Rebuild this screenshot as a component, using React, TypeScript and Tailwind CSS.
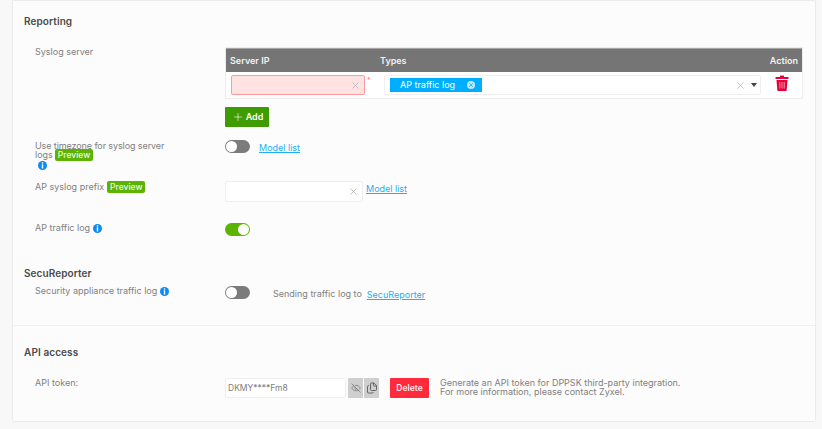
import { Plus, X, EyeOff, Files } from 'lucide-react'

const font = { fontFamily: 'Inter, "Open Sans", sans-serif' }

function Preview() {
  return (
    <span className="inline-block h-[12px] rounded-[2px] bg-[#5cb300] px-[3px] text-[8.5px] leading-[12px] font-medium text-[#eef8e0]">
      Preview
    </span>
  )
}

function InfoDot() {
  return (
    <svg width="9" height="9" viewBox="0 0 9 9" className="inline-block align-middle">
      <circle cx="4.5" cy="4.5" r="4.5" fill="#0c8cf0" />
      <rect x="3.8" y="1.3" width="1.4" height="1.3" fill="#fff" />
      <rect x="3.8" y="3.3" width="1.4" height="4.2" fill="#fff" />
    </svg>
  )
}

function Toggle({ on }: { on?: boolean }) {
  return (
    <div
      className={`flex h-[13px] w-[25px] items-center rounded-full px-[1px] ${
        on ? 'justify-end bg-[#5cb300]' : 'justify-start bg-[#7b7b7b]'
      }`}
    >
      <div className="h-[11px] w-[11px] rounded-full bg-white" />
    </div>
  )
}

function ModelLink({ label = 'Model list' }: { label?: string }) {
  return <a className="text-[9px] leading-[12px] text-[#22b0f5] underline">{label}</a>
}

function Heading({ children }: { children: string }) {
  return <h3 className="text-[10px] leading-[14px] font-semibold tracking-[0.1px] text-[#4a4a4a]">{children}</h3>
}

function TrashIcon() {
  return (
    <svg width="14" height="16" viewBox="0 0 14 16">
      <rect x="5" y="0.5" width="4" height="2" rx="0.5" fill="#e4003a" />
      <rect x="0.5" y="2" width="13" height="2" rx="0.5" fill="#e4003a" />
      <path d="M1.5 5h11l-0.8 10a1 1 0 0 1-1 1H3.3a1 1 0 0 1-1-1z" fill="#e4003a" />
      <path d="M4.8 7v6.5M7 7v6.5M9.2 7v6.5" stroke="#fff" strokeWidth="0.8" opacity="0.75" />
    </svg>
  )
}

export default function App() {
  return (
    <div style={font} className="h-[429px] w-[822px] overflow-hidden bg-[#f7f8f7] pl-[13px] text-[9px] text-[#808080]">
      <div className="h-[421px] w-[802px] border-t border-[#ebebeb] bg-[#fcfcfc] shadow-[0_0_2px_rgba(0,0,0,0.15)]">
        {/* Reporting */}
        <div className="h-[325px] border-b border-[#f0f0f0] pt-[13px] pl-[11px]">
          <Heading>Reporting</Heading>

          <div className="mt-[19px] grid grid-cols-[190px_578px] pl-[11px]">
            <div className="leading-[9px]">Syslog server</div>
            <div>
              <div className="border border-[#ececec]">
                <div className="flex h-[24px] items-center justify-between border-t border-[#a5a5a5] bg-[#757575] pr-[4px] pl-[4px] text-[9px] font-semibold text-[#f2f2f2]">
                  <div className="flex">
                    <span className="w-[150px]">Server IP</span>
                    <span>Types</span>
                  </div>
                  <span>Action</span>
                </div>
                <div className="flex h-[26px] items-start bg-white pt-[3px] pl-[5px]">
                  <div className="flex h-[20px] w-[134px] items-center justify-end rounded-[2px] border border-[#ff9a9f] bg-[#ffe3e3] pr-[3px]">
                    <X size={11} strokeWidth={1.5} className="text-[#aaa]" />
                  </div>
                  <span className="mt-[2px] ml-[2px] w-[17px] text-[7px] leading-[7px] text-[#f77]">*</span>
                  <div className="flex h-[20px] w-[377px] items-center rounded-[2px] border border-[#efefef] pr-[3px] pl-[5px]">
                    <span className="flex h-[14px] w-[92px] items-center justify-between bg-[#00aeff] pr-[7px] pl-[10px] text-[9px] text-white">
                      AP traffic log
                      <span className="flex h-[8px] w-[8px] items-center justify-center rounded-full bg-[#bfe8ff]">
                        <X size={6} strokeWidth={3} className="text-[#00aeff]" />
                      </span>
                    </span>
                    <X size={11} strokeWidth={1.5} className="ml-auto text-[#aaa]" />
                    <span className="ml-[5px] h-0 w-0 border-x-[3.5px] border-t-[4px] border-x-transparent border-t-[#444]" />
                  </div>
                  <div className="ml-[14px] flex h-[16px] w-[14px] items-center justify-center">
                    <TrashIcon />
                  </div>
                </div>
              </div>
              <button className="mt-[8px] flex h-[20px] w-[44px] items-center justify-center gap-[2px] rounded-[1px] bg-[#3f9c00] pl-[1px] text-[9px] font-semibold text-white">
                <Plus size={12} strokeWidth={1.25} />
                Add
              </button>
            </div>
          </div>

          <div className="mt-[12px] grid grid-cols-[190px_1fr] pl-[11px]">
            <div className="h-[37px] w-[150px] leading-[9px]">
              <div className="pt-[2px] tracking-[-0.1px]">Use timezone for syslog server</div>
              <div className="flex h-[9px] items-center gap-[2px]">
                logs <Preview />
              </div>
              <div className="pt-[0.5px] pl-[3px]">
                <InfoDot />
              </div>
            </div>
            <div className="flex items-start pt-[1px]">
              <Toggle />
              <span className="ml-[9px] pt-[1px]">
                <ModelLink />
              </span>
            </div>
          </div>

          <div className="mt-[5px] grid grid-cols-[190px_1fr] pl-[11px]">
            <div className="flex h-[12px] items-center gap-[3px]">
              AP syslog prefix <Preview />
            </div>
            <div className="flex items-start">
              <div className="flex h-[21px] w-[138px] items-center justify-end rounded-[2px] border border-[#efefef] bg-white pr-[3px]">
                <X size={11} strokeWidth={1.5} className="text-[#aaa]" />
              </div>
              <span className="ml-[3px] pt-[1px]">
                <ModelLink />
              </span>
            </div>
          </div>

          <div className="mt-[21px] grid grid-cols-[190px_1fr] pl-[11px]">
            <div className="flex h-[10px] items-center gap-[3px]">
              AP traffic log <InfoDot />
            </div>
            <Toggle on />
          </div>

          <div className="mt-[30px]">
            <Heading>SecuReporter</Heading>
          </div>

          <div className="mt-[6px] grid grid-cols-[190px_1fr] pl-[11px]">
            <div className="flex h-[10px] items-center gap-[3px]">
              Security appliance traffic log <InfoDot />
            </div>
            <div className="flex items-start">
              <Toggle />
              <span className="ml-[23px] pt-[2px] leading-[12px]">Sending traffic log to</span>
              <span className="ml-[5px] pt-[2px]">
                <ModelLink label="SecuReporter" />
              </span>
            </div>
          </div>
        </div>

        {/* API access */}
        <div className="pt-[19px] pl-[11px]">
          <Heading>API access</Heading>
          <div className="mt-[19px] grid grid-cols-[190px_1fr] pl-[11px]">
            <div className="leading-[10px]">API token:</div>
            <div className="flex items-start">
              <div className="flex h-[20px] w-[121px] items-center rounded-[2px] border border-[#efefef] bg-white pl-[2px] text-[8.5px] text-[#808080]">
                DKMY****Fm8
              </div>
              <div className="ml-[2px] flex h-[20px] w-[15px] items-center justify-center bg-[#cfcfcf]">
                <EyeOff size={10} className="text-[#808080]" />
              </div>
              <div className="ml-[1px] flex h-[20px] w-[15px] items-center justify-center bg-[#cfcfcf]">
                <Files size={12} className="text-[#666]" />
              </div>
              <button className="ml-[11px] h-[20px] w-[39px] rounded-[1px] bg-[#ff2a3c] text-[8.5px] font-semibold text-[#ffecec]">
                Delete
              </button>
              <p className="ml-[11px] text-[9px] leading-[9px] text-[#808080]">
                Generate an API token for DPPSK third-party integration.
                <br />
                For more information, please contact Zyxel.
              </p>
            </div>
          </div>
        </div>
      </div>
    </div>
  )
}
